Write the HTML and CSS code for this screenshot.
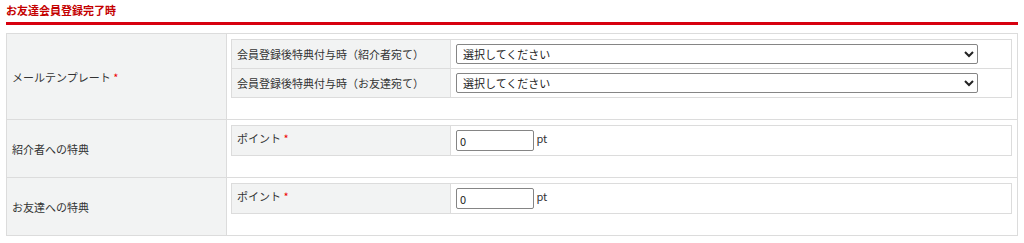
FILE: index.html
```html
<!DOCTYPE html>
<html lang="ja">
<head>
    <meta charset="UTF-8">
    <title>お友達会員登録完了時</title>
    <link rel="stylesheet" href="styles.css">
</head>
<body>
    <h2 class="section-title">お友達会員登録完了時</h2>

    <table class="form-table">
        <colgroup>
            <col class="col-head">
            <col>
        </colgroup>
        <tr>
            <th>メールテンプレート <span class="req">*</span></th>
            <td>
                <table class="sub-table">
                    <colgroup>
                        <col class="col-sub">
                        <col>
                    </colgroup>
                    <tr>
                        <th>会員登録後特典付与時（紹介者宛て）</th>
                        <td>
                            <select class="select">
                                <option>選択してください</option>
                            </select>
                        </td>
                    </tr>
                    <tr>
                        <th>会員登録後特典付与時（お友達宛て）</th>
                        <td>
                            <select class="select">
                                <option>選択してください</option>
                            </select>
                        </td>
                    </tr>
                </table>
            </td>
        </tr>
        <tr>
            <th>紹介者への特典</th>
            <td>
                <table class="sub-table">
                    <colgroup>
                        <col class="col-sub">
                        <col>
                    </colgroup>
                    <tr>
                        <th class="top">ポイント <span class="req">*</span></th>
                        <td><input class="point" type="text" value="0"> pt</td>
                    </tr>
                </table>
            </td>
        </tr>
        <tr>
            <th>お友達への特典</th>
            <td>
                <table class="sub-table">
                    <colgroup>
                        <col class="col-sub">
                        <col>
                    </colgroup>
                    <tr>
                        <th class="top">ポイント <span class="req">*</span></th>
                        <td><input class="point" type="text" value="0"> pt</td>
                    </tr>
                </table>
            </td>
        </tr>
    </table>
</body>
</html>
```

FILE: styles.css
```css
body {
    margin: 0;
    padding: 0 6px;
    background-color: #fff;
    color: #333;
    font-family: 'Noto Sans CJK JP', 'Noto Sans', sans-serif;
    font-size: 11px;
}

.section-title {
    margin: 0 0 8px 0;
    padding: 2px 0 4px 0;
    font-size: 11px;
    line-height: 16px;
    font-weight: bold;
    color: #c40000;
    border-bottom: 3px solid #d7000f;
}

.form-table {
    width: 100%;
    border-collapse: collapse;
    table-layout: fixed;
}

.col-head {
    width: 220px;
}

.form-table > tbody > tr > th,
.form-table > tbody > tr > td {
    border: 1px solid #dcdcdc;
}

.form-table > tbody > tr > th {
    background-color: #f2f3f3;
    font-weight: normal;
    text-align: left;
    vertical-align: middle;
    padding: 0 5px;
}

.form-table > tbody > tr > td {
    padding: 5px 5px 5px 4px;
    vertical-align: top;
}

.sub-table {
    width: 100%;
    border-collapse: collapse;
    table-layout: fixed;
    margin-bottom: 16px;
}

.col-sub {
    width: 219px;
}

.sub-table th,
.sub-table td {
    border: 1px solid #dcdcdc;
    padding: 4px 5px;
    line-height: 16px;
    height: 20px;
}

.sub-table th {
    background-color: #f2f3f3;
    font-weight: normal;
    text-align: left;
    vertical-align: middle;
}

.sub-table th.top {
    vertical-align: top;
}

.req {
    color: #e00;
}

.select {
    width: 522px;
    height: 20px;
    padding: 0 2px;
    font-family: inherit;
    font-size: 11px;
    color: #222;
    background-color: #fff;
    border: 1px solid #858585;
    border-radius: 2px;
    display: block;
}

.point {
    width: 78px;
    height: 21px;
    box-sizing: border-box;
    padding: 0 3px;
    font-family: inherit;
    font-size: 11px;
    color: #222;
    border: 1px solid #858585;
    border-radius: 2px;
    vertical-align: middle;
}
```
